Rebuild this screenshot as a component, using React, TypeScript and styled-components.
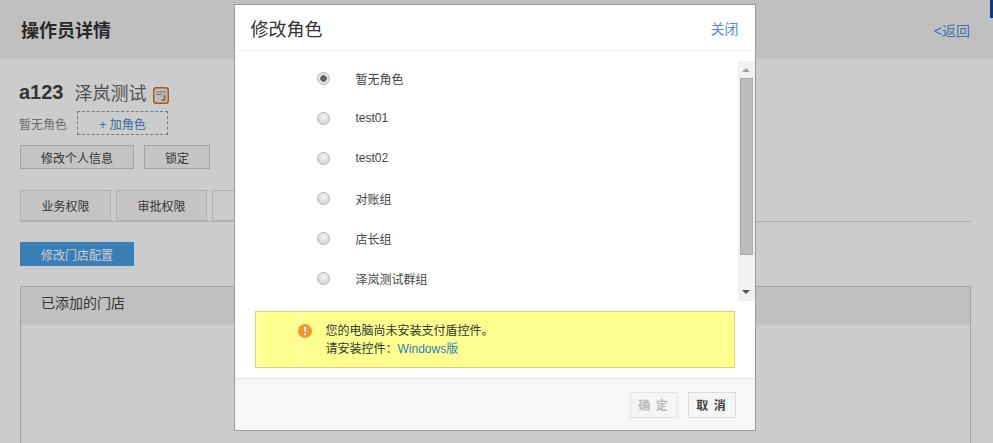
import * as React from 'react'
import styled, { createGlobalStyle } from 'styled-components'

const GlobalStyle = createGlobalStyle`
  html, body {
    margin: 0;
    height: 443px;
    overflow: hidden;
    background: #fff;
    font-family: "Liberation Sans", "Noto Sans CJK SC", sans-serif;
    font-size: 12px;
    color: #333;
  }
  * { box-sizing: border-box; }
`

const Page = styled.div`
  height: 443px;
  overflow: hidden;
`
const TopBar = styled.div`
  height: 59px;
  background: #f1f1f1;
  display: flex;
  align-items: center;
  justify-content: space-between;
  padding: 0 23px 0 21px;
`
const PageTitle = styled.h1`
  margin: 0 0 2px;
  font-size: 18px;
  font-weight: bold;
  color: #333;
`
const BackLink = styled.a`
  font-size: 14px;
  color: #5b8fd9;
`
const Content = styled.div`
  padding: 21px 22px 0 20px;
`
const NameRow = styled.div`
  display: flex;
  align-items: center;
  height: 26px;
  padding-bottom: 2px;
  margin-left: -1px;
`
const LoginName = styled.strong`
  font-size: 20px;
  color: #444;
  margin-right: 11px;
`
const RealName = styled.span`
  font-size: 18px;
  color: #666;
  margin-right: 6px;
`
const IconWrap = styled.span`
  display: flex;
  padding-top: 6px;
`
const RoleRow = styled.div`
  display: flex;
  align-items: center;
  margin: 5px 0 10px -1px;
  gap: 10px;
  color: #888;
`
const AddRole = styled.a`
  width: 91px;
  height: 24px;
  border: 1px dashed #999;
  color: #3f87cf;
  display: flex;
  align-items: center;
  justify-content: center;
`
const ActionRow = styled.div`
  display: flex;
  gap: 10px;
`
const PlainButton = styled.button<{ $primary?: boolean; $wide?: boolean }>`
  width: ${p => (p.$wide ? '114px' : '66px')};
  height: 24px;
  padding: 0;
  font: inherit;
  border: 1px solid ${p => (p.$primary ? '#4a9fe6' : '#ccc')};
  background: ${p => (p.$primary ? '#4a9fe6' : '#f5f5f5')};
  color: ${p => (p.$primary ? '#fff' : '#444')};
`
const Tabs = styled.div`
  display: flex;
  gap: 5px;
  height: 32px;
  margin-top: 21px;
  border-bottom: 1px solid #ddd;
`
const Tab = styled.div<{ $active?: boolean }>`
  width: 91px;
  height: 31px;
  border: 1px solid #ddd;
  background: ${p => (p.$active ? '#fff' : '#f5f5f5')};
  display: flex;
  align-items: center;
  justify-content: center;
  color: #444;
`
const ConfigRow = styled.div`
  margin-top: 20px;
`
const Panel = styled.div`
  margin-top: 20px;
  height: 300px;
  border: 1px solid #ccc;
`
const PanelHead = styled.div`
  height: 38px;
  background: #f0f0f0;
  padding: 0 0 8px 20px;
  display: flex;
  align-items: center;
  font-size: 14px;
  color: #444;
`
const ScrollMark = styled.div`
  position: fixed;
  top: 0;
  right: 0;
  width: 3px;
  height: 18px;
  background: #0a4aa8;
`
const Overlay = styled.div`
  position: fixed;
  inset: 0;
  background: rgba(0, 0, 0, 0.2);
  padding-right: 4px;
`
const Modal = styled.div`
  width: 522px;
  height: 427px;
  margin: 4px auto 0;
  background: #fff;
  border: 1px solid #999;
  display: flex;
  flex-direction: column;
`
const ModalHead = styled.div`
  height: 46px;
  flex: none;
  display: flex;
  align-items: center;
  justify-content: space-between;
  padding: 0 16px 0 16px;
  border-bottom: 1px solid #eee;
`
const ModalTitle = styled.h2`
  margin: 0;
  font-size: 18px;
  font-weight: normal;
  color: #333;
`
const CloseLink = styled.a`
  font-size: 14px;
  color: #4a90d9;
`
const ModalBody = styled.div`
  flex: 1;
  padding-top: 10px;
`
const ListArea = styled.div`
  height: 240px;
  display: flex;
`
const RoleList = styled.div`
  flex: 1;
  overflow: hidden;
  padding: 0 0 0 82px;
`
const RoleItem = styled.label`
  height: 40px;
  display: flex;
  align-items: center;
  gap: 26px;
  color: #444;
  margin-top: -3px;
  margin-bottom: 3px;
`
const Radio = styled.input`
  appearance: none;
  width: 13px;
  height: 13px;
  margin: 0;
  border-radius: 50%;
  border: 1px solid #b4b4b4;
  background: radial-gradient(circle at 50% 35%, #f2f2f2, #cfcfcf);
  &:checked {
    background: radial-gradient(circle, #666 0 3px, #e4e4e4 3.5px);
  }
`
const Scrollbar = styled.div`
  width: 17px;
  background: #f1f1f1;
  display: flex;
  flex-direction: column;
  align-items: center;
`
const ArrowUp = styled.div`
  width: 0;
  height: 0;
  margin-top: 7px;
  border: 4px solid transparent;
  border-top: 0;
  border-bottom: 4px solid #a3a3a3;
`
const Thumb = styled.div`
  width: 13px;
  height: 177px;
  margin: 6px 0 auto;
  background: #bdbdbd;
  border: 1px solid #a9a9a9;
`
const ArrowDown = styled.div`
  width: 0;
  height: 0;
  margin-bottom: 7px;
  border: 4px solid transparent;
  border-bottom: 0;
  border-top: 4px solid #505050;
`
const Notice = styled.div`
  margin: 10px 20px 0;
  height: 57px;
  background: #ffff8f;
  border: 1px solid #dccf82;
  display: flex;
`
const NoticeIcon = styled.div`
  width: 45px;
  padding: 12px 0 0 42px;
  border-right: 1px solid #fffbd0;
  flex: none;
  overflow: visible;
`
const NoticeText = styled.div`
  padding: 10px 0 0 25px;
  line-height: 18px;
  color: #333;
`
const NoticeLink = styled.a`
  color: #2a80c0;
`
const ModalFoot = styled.div`
  height: 52px;
  flex: none;
  background: #f7f7f7;
  border-top: 1px solid #e5e5e5;
  display: flex;
  justify-content: flex-end;
  align-items: center;
  gap: 10px;
  padding: 0 19px 0 0;
`
const FootButton = styled.button<{ $disabled?: boolean }>`
  width: 48px;
  height: 26px;
  padding: 0;
  font: inherit;
  font-weight: bold;
  letter-spacing: 1px;
  background: #f5f5f5;
  border: 1px solid ${p => (p.$disabled ? '#e4e4e4' : '#ddd')};
  color: ${p => (p.$disabled ? '#bbb' : '#444')};
`

const EditIcon = () => (
  <svg width="16" height="17" viewBox="0 0 16 17">
    <rect x="0.75" y="0.75" width="14.5" height="15.5" rx="2.5" fill="#f4ece2" stroke="#c8703a" strokeWidth="1.5" />
    <path d="M3 5h10M3 7.5h6" stroke="#8a93a0" />
    <path d="M10.5 8h2v6h-4v-2h2z" fill="#b98a5c" />
  </svg>
)

const WarnIcon = () => (
  <svg width="14" height="14" viewBox="0 0 14 14">
    <circle cx="7" cy="7" r="7" fill="#f59331" />
    <rect x="6" y="2.5" width="2" height="5.5" rx="0.8" fill="#fff" />
    <rect x="6" y="9.3" width="2" height="2" rx="0.8" fill="#fff" />
  </svg>
)

const roles = ['暂无角色', 'test01', 'test02', '对账组', '店长组', '泽岚测试群组']

export default function App() {
  return (
    <Page>
      <GlobalStyle />
      <TopBar>
        <PageTitle>操作员详情</PageTitle>
        <BackLink>&lt;返回</BackLink>
      </TopBar>
      <Content>
        <NameRow>
          <LoginName>a123</LoginName>
          <RealName>泽岚测试</RealName>
          <IconWrap>
            <EditIcon />
          </IconWrap>
        </NameRow>
        <RoleRow>
          <span>暂无角色</span>
          <AddRole>+ 加角色</AddRole>
        </RoleRow>
        <ActionRow>
          <PlainButton $wide>修改个人信息</PlainButton>
          <PlainButton>锁定</PlainButton>
        </ActionRow>
        <Tabs>
          <Tab>业务权限</Tab>
          <Tab>审批权限</Tab>
          <Tab $active />
        </Tabs>
        <ConfigRow>
          <PlainButton $primary $wide>修改门店配置</PlainButton>
        </ConfigRow>
        <Panel>
          <PanelHead>已添加的门店</PanelHead>
        </Panel>
      </Content>
      <ScrollMark />
      <Overlay>
        <Modal>
          <ModalHead>
            <ModalTitle>修改角色</ModalTitle>
            <CloseLink>关闭</CloseLink>
          </ModalHead>
          <ModalBody>
            <ListArea>
              <RoleList>
                {roles.map((name, i) => (
                  <RoleItem key={name}>
                    <Radio type="radio" name="role" defaultChecked={i === 0} />
                    {name}
                  </RoleItem>
                ))}
              </RoleList>
              <Scrollbar>
                <ArrowUp />
                <Thumb />
                <ArrowDown />
              </Scrollbar>
            </ListArea>
            <Notice>
              <NoticeIcon>
                <WarnIcon />
              </NoticeIcon>
              <NoticeText>
                您的电脑尚未安装支付盾控件。
                <br />
                请安装控件：<NoticeLink>Windows版</NoticeLink>
              </NoticeText>
            </Notice>
          </ModalBody>
          <ModalFoot>
            <FootButton $disabled>确 定</FootButton>
            <FootButton>取 消</FootButton>
          </ModalFoot>
        </Modal>
      </Overlay>
    </Page>
  )
}
